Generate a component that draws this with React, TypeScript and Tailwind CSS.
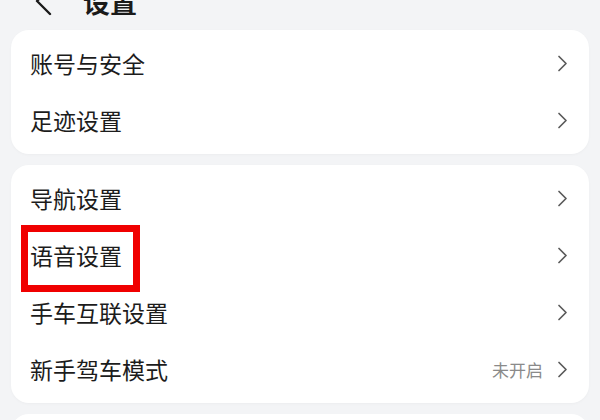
import React from "react";

const Chevron = () => (
  <svg width="11" height="17" viewBox="0 0 11 17" fill="none" className="shrink-0">
    <path d="M2 1.5 L9 8.5 L2 15.5" stroke="#5a5a5a" strokeWidth="1.7" strokeLinecap="round" strokeLinejoin="round" />
  </svg>
);

type Row = { label: string; value?: string; marked?: boolean };

const Card = ({ rows }: { rows: Row[] }) => (
  <div className="mx-[11px] rounded-[18px] bg-white py-[5px] shadow-[0_1px_3px_rgba(0,0,0,0.03)]">
    {rows.map((row) => (
      <div key={row.label} className="relative flex h-[57px] items-center pl-[19px] pr-[21px]">
        <span className="flex-1 text-[23px] leading-none text-[#1c1c1c]">{row.label}</span>
        {row.value && <span className="mr-[14px] text-[17px] leading-none text-[#8a8a8a]">{row.value}</span>}
        <Chevron />
        {row.marked && (
          <div className="absolute left-[10px] top-[-2px] h-[67px] w-[119px] border-[7px] border-[#f00000]" />
        )}
      </div>
    ))}
  </div>
);

export default function App() {
  return (
    <div
      className="flex h-[420px] w-[600px] flex-col overflow-hidden bg-[#f3f4f6]"
      style={{ fontFamily: '"Noto Sans CJK SC", "Noto Sans", sans-serif' }}
    >
      <div className="-mt-[14px] flex h-[30px] shrink-0 items-center">
        <svg width="20" height="30" viewBox="0 0 20 30" fill="none" className="ml-[33px]">
          <path d="M17 2 L4 15 L17 28" stroke="#1a1a1a" strokeWidth="2.4" strokeLinecap="round" strokeLinejoin="round" />
        </svg>
        <span className="ml-[30px] text-[27px] font-bold leading-none text-[#1a1a1a]">设置</span>
      </div>
      <div className="mt-[14px] flex flex-col gap-[11px]">
        <Card rows={[{ label: "账号与安全" }, { label: "足迹设置" }]} />
        <Card
          rows={[
            { label: "导航设置" },
            { label: "语音设置", marked: true },
            { label: "手车互联设置" },
            { label: "新手驾车模式", value: "未开启" },
          ]}
        />
        <div className="mx-[11px] h-[60px] shrink-0 rounded-[18px] bg-white" />
      </div>
    </div>
  );
}
